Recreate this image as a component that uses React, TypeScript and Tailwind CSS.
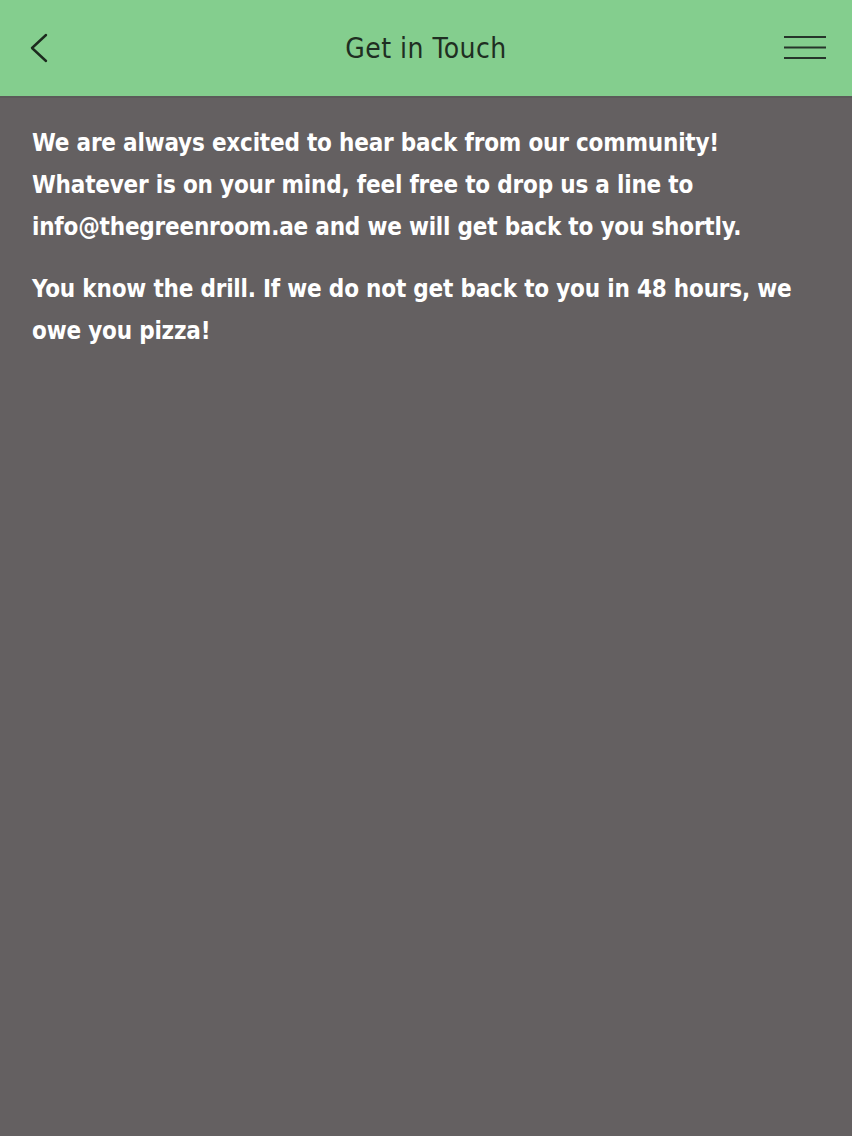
import React from "react";

export default function App() {
  return (
    <div className="w-[852px] h-[1136px] bg-[#646061] flex flex-col overflow-hidden">
      <header className="h-[98px] bg-[#84ce8e] grid grid-cols-[1fr_auto_1fr] items-center px-[26px] shrink-0 border-b-2 border-[#5b5a59]">
        <div className="flex items-center">
          <svg width="26" height="34" viewBox="0 0 26 34" className="ml-0">
            <path d="M20 4 L6 17 L20 30" fill="none" stroke="#1c2a1e" strokeWidth="2.4" strokeLinecap="round" strokeLinejoin="round" />
          </svg>
        </div>
        <h1 className="text-[28px] text-[#1f2e22] font-['DejaVu_Sans_Condensed','DejaVu_Sans',sans-serif] font-normal tracking-[0.5px] mt-[2px]">
          Get in Touch
        </h1>
        <div className="flex items-center justify-end">
          <svg width="44" height="26" viewBox="0 0 44 26" className="mr-[-1px]">
            <path d="M1 2 H43 M1 12.5 H43 M1 23 H43" stroke="#26352a" strokeWidth="2" />
          </svg>
        </div>
      </header>
      <main className="px-[32px] pt-[24px] text-white font-['DejaVu_Sans_Condensed','DejaVu_Sans',sans-serif] font-bold text-[24px] tracking-[-0.2px] leading-[42px]">
        <p>
          We are always excited to hear back from our community!
          <br />
          Whatever is on your mind, feel free to drop us a line to
          <br />
          info@thegreenroom.ae and we will get back to you shortly.
        </p>
        <p className="mt-[20px]">
          You know the drill. If we do not get back to you in 48 hours, we
          <br />
          owe you pizza!
        </p>
      </main>
    </div>
  );
}
